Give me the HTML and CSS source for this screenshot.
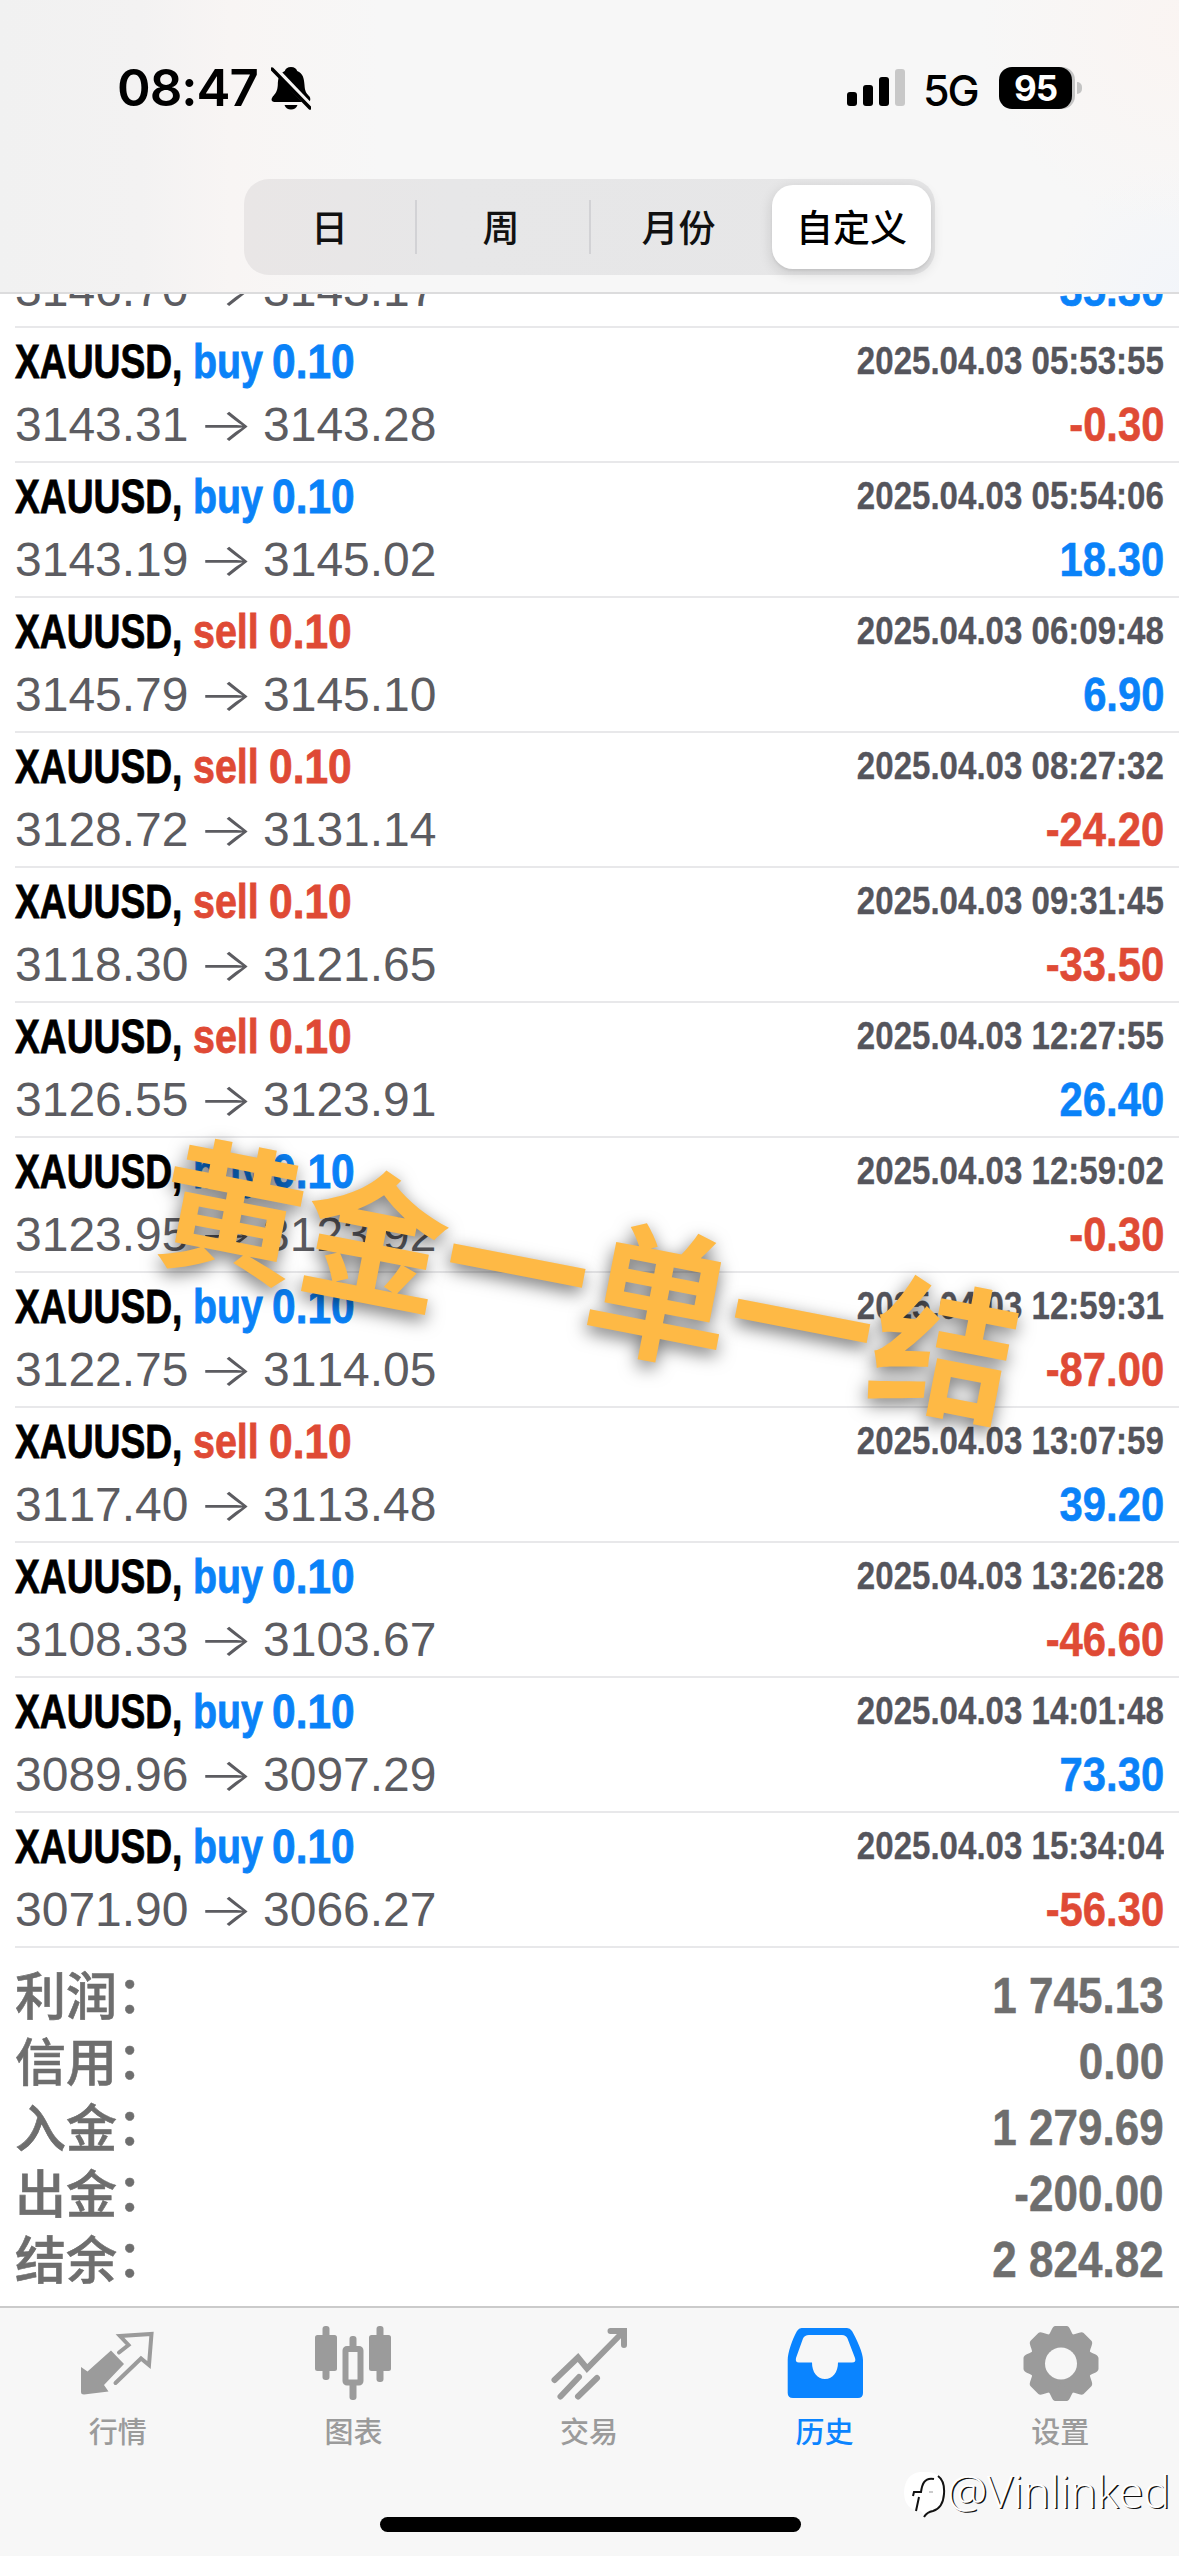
FILE: index.html
```html
<!DOCTYPE html>
<html lang="zh-CN">
<head>
<meta charset="utf-8">
<title>历史</title>
<link rel="stylesheet" href="styles.css">
</head>
<body>
<div class="screen">
  <header class="header">
    <div class="status">
      <div class="status-left">
        <span class="clock">08:47</span>
        <svg class="bell" viewBox="0 0 40 44" width="40" height="44">
          <path d="M20 1C16.500 1 14.300 3 13.800 5C7.500 8 7 13 6.800 19C6.500 25 4.500 27.500 1.800 30.500C-.5 33.500 .5 36 3.500 36H36.500C39.500 36 40 33 38.500 30.500C35 27 33.800 25 33.500 19C33 12 32 7.500 26.200 5C25.700 3 23.500 1 20 1Z"/>
          <path d="M13.500 39H26.500C25.500 42 23 43.500 20 43.500S14.500 42 13.500 39Z"/>
          <path class="bell-gap" d="M2 1L41 42"/>
          <path class="bell-slash" d="M1 3L39 42"/>
        </svg>
      </div>
      <div class="status-right">
        <svg class="signal" viewBox="0 0 60 40" width="60" height="40">
          <rect x="1" y="24" width="10" height="14" rx="3"/>
          <rect x="17" y="17" width="10" height="21" rx="3"/>
          <rect x="33" y="9" width="10" height="29" rx="3"/>
          <rect class="off" x="49" y="1" width="10" height="37" rx="3"/>
        </svg>
        <span class="network">5G</span>
        <span class="battery">95</span>
        <span class="nub"></span>
      </div>
    </div>
    <nav class="segments">
      <span class="segment">日</span>
      <span class="segment">周</span>
      <span class="segment">月份</span>
      <span class="segment active">自定义</span>
    </nav>
  </header>

  <main class="history">
    <div class="deal partial"><span class="prices"><span class="from">3146.70</span><span class="arrow">→</span><span>3143.17</span></span><span class="profit up">35.30</span></div>
    <div class="deal"><span class="title"><b class="symbol">XAUUSD,</b><b class="side buy">buy</b><b class="lot buy">0.10</b></span><span class="time">2025.04.03 05:53:55</span><span class="prices"><span class="from">3143.31</span><span class="arrow">→</span><span>3143.28</span></span><span class="profit down">-0.30</span></div>
    <div class="deal"><span class="title"><b class="symbol">XAUUSD,</b><b class="side buy">buy</b><b class="lot buy">0.10</b></span><span class="time">2025.04.03 05:54:06</span><span class="prices"><span class="from">3143.19</span><span class="arrow">→</span><span>3145.02</span></span><span class="profit up">18.30</span></div>
    <div class="deal"><span class="title"><b class="symbol">XAUUSD,</b><b class="side sell">sell</b><b class="lot sell">0.10</b></span><span class="time">2025.04.03 06:09:48</span><span class="prices"><span class="from">3145.79</span><span class="arrow">→</span><span>3145.10</span></span><span class="profit up">6.90</span></div>
    <div class="deal"><span class="title"><b class="symbol">XAUUSD,</b><b class="side sell">sell</b><b class="lot sell">0.10</b></span><span class="time">2025.04.03 08:27:32</span><span class="prices"><span class="from">3128.72</span><span class="arrow">→</span><span>3131.14</span></span><span class="profit down">-24.20</span></div>
    <div class="deal"><span class="title"><b class="symbol">XAUUSD,</b><b class="side sell">sell</b><b class="lot sell">0.10</b></span><span class="time">2025.04.03 09:31:45</span><span class="prices"><span class="from">3118.30</span><span class="arrow">→</span><span>3121.65</span></span><span class="profit down">-33.50</span></div>
    <div class="deal"><span class="title"><b class="symbol">XAUUSD,</b><b class="side sell">sell</b><b class="lot sell">0.10</b></span><span class="time">2025.04.03 12:27:55</span><span class="prices"><span class="from">3126.55</span><span class="arrow">→</span><span>3123.91</span></span><span class="profit up">26.40</span></div>
    <div class="deal"><span class="title"><b class="symbol">XAUUSD,</b><b class="side buy">buy</b><b class="lot buy">0.10</b></span><span class="time">2025.04.03 12:59:02</span><span class="prices"><span class="from">3123.95</span><span class="arrow">→</span><span>3123.92</span></span><span class="profit down">-0.30</span></div>
    <div class="deal"><span class="title"><b class="symbol">XAUUSD,</b><b class="side buy">buy</b><b class="lot buy">0.10</b></span><span class="time">2025.04.03 12:59:31</span><span class="prices"><span class="from">3122.75</span><span class="arrow">→</span><span>3114.05</span></span><span class="profit down">-87.00</span></div>
    <div class="deal"><span class="title"><b class="symbol">XAUUSD,</b><b class="side sell">sell</b><b class="lot sell">0.10</b></span><span class="time">2025.04.03 13:07:59</span><span class="prices"><span class="from">3117.40</span><span class="arrow">→</span><span>3113.48</span></span><span class="profit up">39.20</span></div>
    <div class="deal"><span class="title"><b class="symbol">XAUUSD,</b><b class="side buy">buy</b><b class="lot buy">0.10</b></span><span class="time">2025.04.03 13:26:28</span><span class="prices"><span class="from">3108.33</span><span class="arrow">→</span><span>3103.67</span></span><span class="profit down">-46.60</span></div>
    <div class="deal"><span class="title"><b class="symbol">XAUUSD,</b><b class="side buy">buy</b><b class="lot buy">0.10</b></span><span class="time">2025.04.03 14:01:48</span><span class="prices"><span class="from">3089.96</span><span class="arrow">→</span><span>3097.29</span></span><span class="profit up">73.30</span></div>
    <div class="deal"><span class="title"><b class="symbol">XAUUSD,</b><b class="side buy">buy</b><b class="lot buy">0.10</b></span><span class="time">2025.04.03 15:34:04</span><span class="prices"><span class="from">3071.90</span><span class="arrow">→</span><span>3066.27</span></span><span class="profit down">-56.30</span></div>
    <dl class="summary">
      <div class="sum-row"><dt>利润<span class="colon">：</span></dt><dd>1 745.13</dd></div>
      <div class="sum-row"><dt>信用<span class="colon">：</span></dt><dd>0.00</dd></div>
      <div class="sum-row"><dt>入金<span class="colon">：</span></dt><dd>1 279.69</dd></div>
      <div class="sum-row"><dt>出金<span class="colon">：</span></dt><dd>-200.00</dd></div>
      <div class="sum-row"><dt>结余<span class="colon">：</span></dt><dd>2 824.82</dd></div>
    </dl>
  </main>

  <footer class="footer">
    <nav class="tabs">
      <div class="tab">
        <svg viewBox="0 0 84 84" width="84" height="84">
          <path class="fill" d="M5 45L11.500 49.500L35 28.500L48 42L28 63L32.500 69.500L8 72.500Q5 72.500 5 70Z"/>
          <path class="line thin" d="M43 30.500L52.500 23L44 14L75.500 12L73 43L65 36.500L39.500 61"/>
        </svg>
        <span>行情</span>
      </div>
      <div class="tab">
        <svg viewBox="0 0 84 84" width="84" height="84">
          <rect class="fill" x="4" y="13" width="22" height="36" rx="2.500"/>
          <rect class="fill" x="11.500" y="4" width="7" height="54" rx="3"/>
          <rect class="fill" x="58" y="13" width="22" height="36" rx="2.500"/>
          <rect class="fill" x="65.500" y="4" width="7" height="56" rx="3"/>
          <rect class="fill" x="38.500" y="14" width="7" height="15" rx="3"/>
          <rect class="fill" x="38.500" y="60" width="7" height="18" rx="3"/>
          <rect class="line candle" x="34.500" y="27" width="15" height="33.500" rx="1.500"/>
        </svg>
        <span>图表</span>
      </div>
      <div class="tab">
        <svg viewBox="0 0 84 84" width="84" height="84">
          <path class="line" d="M7.500 58L31 35.500L40 46.500L76 10M63.500 9H77V23M13.500 74.500L32 55M31 74.500L50 56"/>
        </svg>
        <span>交易</span>
      </div>
      <div class="tab current">
        <svg viewBox="0 0 84 84" width="84" height="84">
          <path class="fill" fill-rule="evenodd" d="M18.500 6H64Q67 6 69 9C74 18 80 31 80 38V71Q80 76 75 76H10Q4.700 76 4.700 71V38C4.700 31 9 18 14 9Q16 6 18.500 6ZM26 13Q21.500 13 20 16.500L13 36Q12 40.500 16 40.500H29C29 50 34 57 42 57S55 50 55 40.500H69Q73.500 40.500 72 36L64.500 16.500Q63 13 59 13Z"/>
        </svg>
        <span>历史</span>
      </div>
      <div class="tab">
        <svg viewBox="-43 -41.500 84 84" width="84" height="84">
          <defs><path id="teeth" d="M-14 -27C-10 -29 -9.500 -37.500 -5.500 -37.500H5.500C9.500 -37.500 10 -29 14 -27V27C10 29 9.500 37.500 5.500 37.500H-5.500C-9.500 37.500 -10 29 -14 27Z"/></defs>
          <g class="fill"><use href="#teeth"/><use href="#teeth" transform="rotate(45)"/><use href="#teeth" transform="rotate(90)"/><use href="#teeth" transform="rotate(135)"/></g>
          <circle class="hole" r="16"/>
        </svg>
        <span>设置</span>
      </div>
    </nav>
    <div class="home-indicator"></div>
  </footer>

  <div class="caption">黄金一单一结</div>
  <div class="watermark">
    <svg viewBox="0 0 42 48" width="42" height="48">
      <path class="mark" d="M16 0H24Q39 1 39 18Q39 35 27 38Q21 39 20 44L17 39Q0 38 0 20Q1 2 16 0Z"/>
      <path class="mark-shadow" d="M34 4Q41 9 40 22Q39 36 29 39Q23 40 20 45"/>
      <path class="mark-f" d="M30 7C20 5 18 13 17 20H10L9 24M15 25L12 39"/>
      <path class="mark-dash" d="M25 20H29"/>
    </svg>
    <span>@Vinlinked</span>
  </div>
</div>
</body>
</html>
```
FILE: styles.css
```css
* { box-sizing: border-box; }

body { margin: 0; background: #fff; }

.screen {
  position: relative;
  display: flex;
  flex-direction: column;
  width: 1179px;
  height: 2556px;
  overflow: hidden;
  background: #fff;
  font-family: "Liberation Sans", "Noto Sans CJK SC", sans-serif;
  font-kerning: none;
}

/* header */
.header {
  flex: none;
  display: flex;
  flex-direction: column;
  align-items: center;
  height: 294px;
  border-bottom: 2px solid #dcdcdd;
  background:
    radial-gradient(circle at 100% 10%, rgba(251, 244, 241, .8), rgba(251, 244, 241, 0) 200px),
    radial-gradient(circle at 100% 100%, rgba(242, 245, 250, .9), rgba(242, 245, 250, 0) 130px),
    linear-gradient(90deg, #f1f1f1 0, #f3f2f2 140px, #f8f5f4 230px, #f7f7f7 380px);
}

.status {
  display: flex;
  justify-content: space-between;
  width: 100%;
  height: 179px;
  padding: 66px 97px 0 117px;
}

.status-left, .status-right {
  display: flex;
  align-items: center;
  height: 44px;
  font-family: Inter, sans-serif;
}

.clock {
  width: 154px;
  font-size: 51px;
  font-weight: 600;
  line-height: 44px;
  letter-spacing: -1px;
}

.bell-gap { stroke: #f7f5f4; stroke-width: 6; }
.bell-slash { stroke: #000; stroke-width: 3.5; stroke-linecap: round; }
.signal .off { fill: #c8c8c8; }

.network {
  width: 76px;
  margin-top: 3px;
  padding-left: 17px;
  font-size: 43px;
  font-weight: 500;
  letter-spacing: -2px;
}

.battery {
  width: 73px;
  height: 42px;
  margin-left: 17px;
  border-radius: 13px;
  background: #000;
  box-shadow: 3px 0 0 #c4c4c4;
  color: #fff;
  font-size: 35px;
  font-weight: 700;
  line-height: 42px;
  text-align: center;
  letter-spacing: -1px;
}

.nub {
  width: 5px;
  height: 12px;
  margin-left: 5px;
  border-radius: 0 5px 5px 0;
  background: #c4c4c4;
}

.segments {
  display: grid;
  grid-template-columns: 169px 174px 181px 159px;
  width: 691px;
  height: 96px;
  padding: 6px 4px;
  border-radius: 25px;
  background: linear-gradient(90deg, #e9e6e6, #e7e7e8 30%, #e6e6e7);
}

.segment {
  display: flex;
  align-items: center;
  justify-content: center;
  padding-bottom: 1px;
  font: 500 37px/1 "Noto Sans CJK SC", sans-serif;
  color: #111;
}

.segment:nth-child(-n+2) {
  background: linear-gradient(#d2d2d5, #d2d2d5) right center / 2px 54px no-repeat;
}

.segment:nth-child(-n+3) { padding-right: 6px; }

.segment.active {
  border-radius: 21px;
  background: #fff;
  box-shadow: 0 4px 14px rgba(0, 0, 0, .14), 0 2px 2px rgba(0, 0, 0, .05);
  color: #000;
}

/* deals */
.history {
  flex: 1;
  min-height: 0;
  display: flex;
  flex-direction: column;
  justify-content: flex-end;
  overflow: hidden;
}

.deal {
  flex: none;
  display: grid;
  grid-template: 67px 59px / 1fr auto;
  height: 135px;
  margin-left: 15px;
  padding-right: 15px;
  border-bottom: 2px solid #e8e8ea;
  font-size: 48px;
  line-height: 59px;
  white-space: pre;
}

.deal.partial { grid-template-rows: 59px; height: 68px; }

.title { display: flex; line-height: 67px; -webkit-text-stroke: .8px; }
.title b { transform-origin: left; }
.symbol { width: 178px; transform: scaleX(.775); }
.side { width: 79px; transform: scaleX(.82); }
.side.sell { width: 76px; }
.lot { width: 90px; transform: scaleX(.885); }

.buy, .up { color: #0a82f8; }
.sell, .down { color: #df4a35; }

.time {
  transform: scaleX(.87);
  transform-origin: right;
  color: #55555c;
  font-size: 38px;
  font-weight: 700;
  line-height: 66px;
  -webkit-text-stroke: .3px;
}

.prices { display: flex; color: #5c5c61; }
.from { width: 183px; }
.arrow {
  width: 65px;
  transform: scaleY(.8);
  font-family: Inter, sans-serif;
  font-size: 58px;
  font-weight: 300;
}

.profit {
  justify-self: end;
  transform: scaleX(.87);
  transform-origin: right;
  font-weight: 700;
  -webkit-text-stroke: .6px;
}

/* totals */
.summary {
  flex: none;
  margin: 0;
  padding: 15px 15px 13px;
  color: #6e6e6e;
}

.sum-row { display: flex; justify-content: space-between; height: 66px; line-height: 67px; }
.sum-row dt { font: 500 51px/60px "Noto Sans CJK SC", sans-serif; -webkit-text-stroke: .6px; }
.sum-row dd {
  margin: 0;
  transform: scaleX(.88);
  transform-origin: right;
  font-size: 50px;
  font-weight: 700;
  -webkit-text-stroke: .5px;
}
.colon { position: relative; top: -2px; }

/* bottom bar */
.footer {
  flex: none;
  display: flex;
  flex-direction: column;
  align-items: center;
  height: 250px;
  border-top: 2px solid #cbcbcb;
  background: #f7f7f7;
}

.tabs {
  display: grid;
  grid-template-columns: repeat(5, 1fr);
  width: 100%;
  height: 209px;
  padding-right: 1px;
}

.tab {
  display: flex;
  flex-direction: column;
  align-items: center;
  padding-top: 14px;
  color: #9b9b9b;
  font: 500 29px/36px "Noto Sans CJK SC", sans-serif;
}

.tab span { margin-top: 6px; }
.current { color: #0a84ff; }
.tab .fill { fill: currentColor; }
.tab .line { fill: none; stroke: currentColor; stroke-width: 6; stroke-linecap: round; }
.tab .thin { stroke-width: 4; }
.tab .hole { fill: #f7f7f7; }

.home-indicator { width: 421px; height: 15px; margin-left: 2px; border-radius: 8px; background: #000; }

/* overlays */
.caption {
  position: absolute;
  left: 155px;
  top: 1201px;
  width: 870px;
  color: #feb945;
  font: 700 145px/145px "Noto Sans CJK SC", sans-serif;
  white-space: nowrap;
  transform: rotate(11deg);
  text-shadow: 0 6px 18px rgba(0, 0, 0, .55);
}

.watermark {
  position: absolute;
  right: 9px;
  bottom: 36px;
  display: flex;
  gap: 1px;
  color: #fff;
  font: 300 45px/38px "Open Sans", sans-serif;
  text-shadow: 1.5px 1px 0 #111;
}

.mark { fill: #fff; }
.mark-shadow, .mark-f, .mark-dash { fill: none; stroke: #111; stroke-width: 2; }
.mark-dash { stroke: #999; stroke-width: 1; }
```
